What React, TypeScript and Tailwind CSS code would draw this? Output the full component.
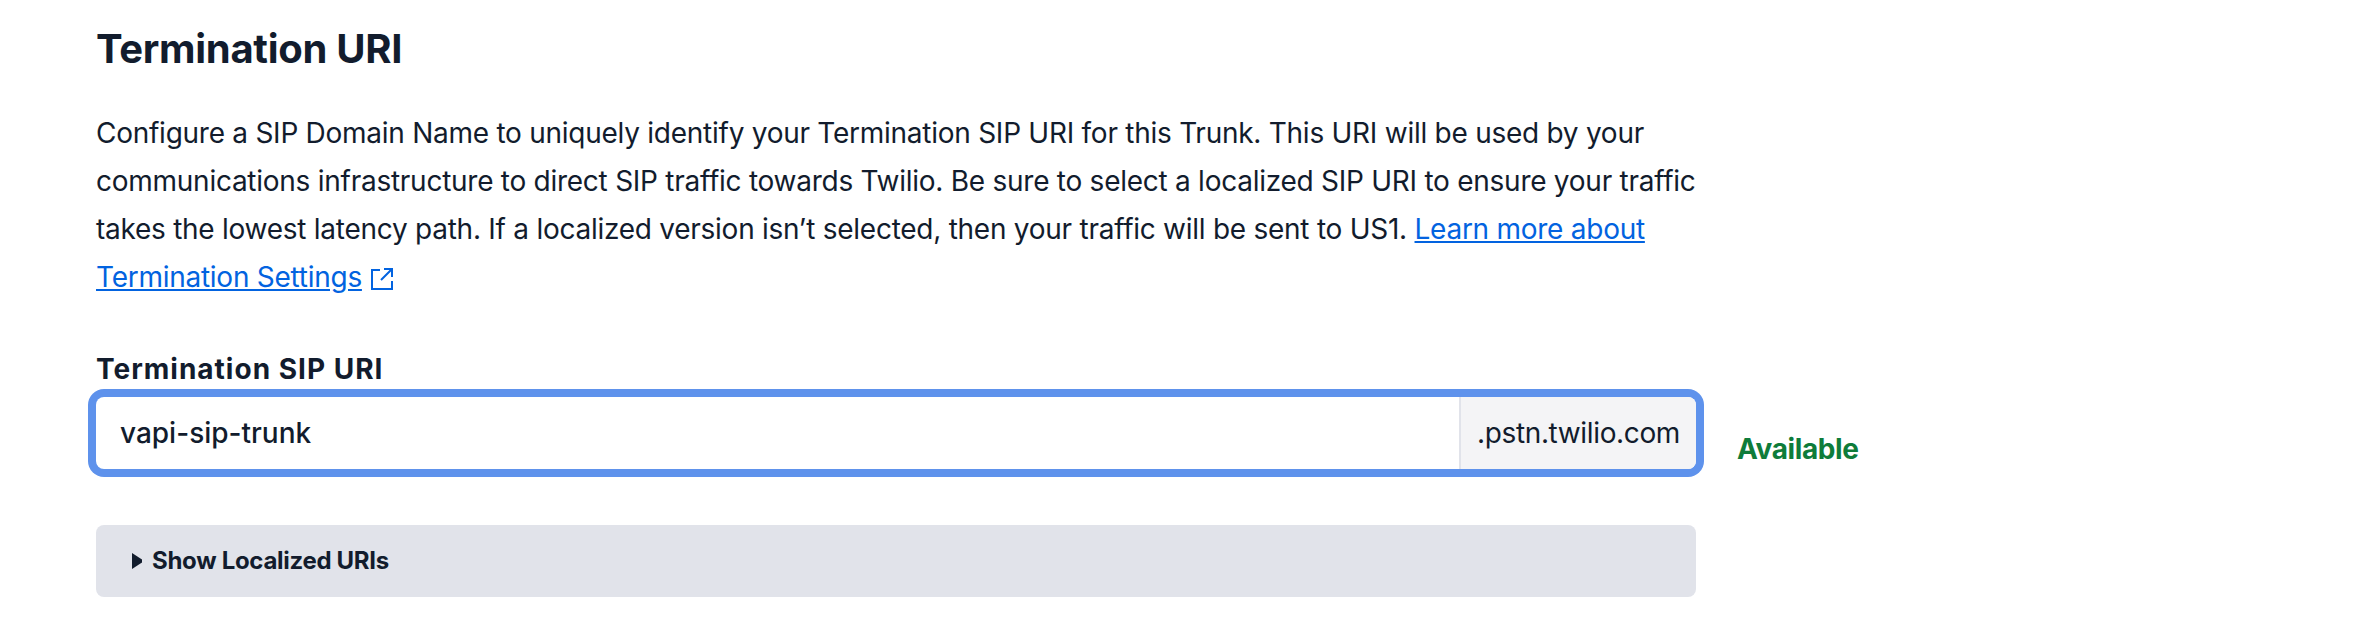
export default function App() {
  return (
    <div className="min-h-[642px] bg-white pl-[96px] font-['Inter',sans-serif] text-[#121c2d]">
      <h2 className="pt-[21px] text-[40px] leading-[56px] font-bold tracking-[-0.3px]">Termination URI</h2>

      <p className="mt-[32px] w-[1600px] text-[28px] leading-[48px] tracking-[-0.26px]">
        Configure a SIP Domain Name to uniquely identify your Termination SIP URI for this Trunk. This URI will be used
        by your communications infrastructure to direct SIP traffic towards Twilio. Be sure to select a localized SIP
        URI to ensure your traffic takes the lowest latency path. If a localized version isn’t selected, then your
        traffic will be sent to US1.{" "}
        <a href="#" className="text-[#0263e0] underline">
          Learn more about Termination Settings
          <svg viewBox="0 0 24 24" fill="none" stroke="currentColor" strokeWidth="2" className="ml-[8px] inline-block h-[24px] w-[24px] align-[-4px]">
            <path d="M10 3H2v19h20v-8" />
            <path d="M11 13 22 2M14 2h8v8" />
          </svg>
        </a>
      </p>

      <label className="mt-[48px] block text-[28px] leading-[40px] font-bold tracking-[1px]">
        Termination SIP URI
      </label>

      <div className="mt-[8px] flex items-center">
        <div className="flex h-[72px] w-[1600px] overflow-hidden rounded-[8px] bg-white shadow-[0_0_0_8px_#5e92ec]">
          <input
            readOnly
            value="vapi-sip-trunk"
            className="min-w-0 flex-1 bg-transparent pl-[24px] text-[28px] font-medium outline-none"
          />
          <div className="flex items-center border-l-2 border-[#e1e3ea] bg-[#f4f4f6] px-[16px] text-[28px] tracking-[-0.36px]">
            .pstn.twilio.com
          </div>
        </div>
        <span className="mt-[32px] ml-[41px] text-[28px] leading-[36px] font-bold tracking-[-0.4px] text-[#0e7c3a]">
          Available
        </span>
      </div>

      <div className="mt-[56px] flex h-[72px] w-[1600px] items-center gap-[10px] rounded-[8px] bg-[#e1e3ea] pl-[36px]">
        <svg viewBox="0 0 10 16" className="h-[16px] w-[10px] fill-current">
          <path d="M0 0 10 6.5V9.5L0 16Z" />
        </svg>
        <span className="text-[24px] font-bold tracking-[-0.3px]">Show Localized URIs</span>
      </div>
    </div>
  );
}
